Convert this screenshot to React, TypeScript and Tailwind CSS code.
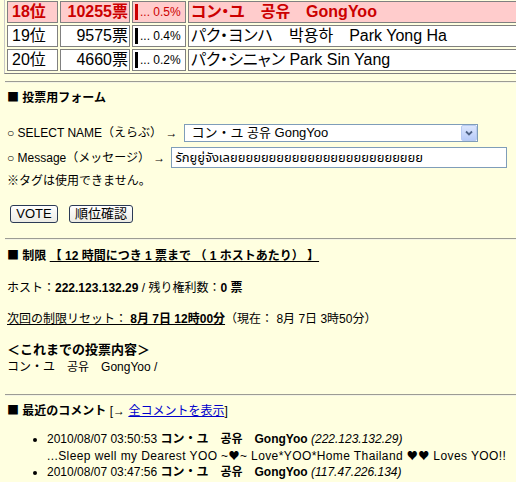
import React from 'react';

const rows = [
  { rank: '18位', votes: '10255票', pct: '0.5%', name: 'コン・ユ　공유　GongYoo', hi: true },
  { rank: '19位', votes: '9575票', pct: '0.4%', name: 'パク・ヨンハ　박용하　Park Yong Ha', hi: false },
  { rank: '20位', votes: '4660票', pct: '0.2%', name: 'パク・シニャン Park Sin Yang', hi: false },
];

const comments = [
  { date: '2010/08/07 03:50:53', ip: '(222.123.132.29)', text: true },
  { date: '2010/08/07 03:47:56', ip: '(117.47.226.134)', text: false },
];

const cjk = "font-['Noto_Sans_CJK_JP',sans-serif]";

function Rule() {
  return <div className="ml-[5px] h-[2px] border-t border-b border-t-[#9c9c94] border-b-[#f4f4e4]" />;
}

function Sq() {
  return <span className={`${cjk} font-normal`}>■</span>;
}

function Heart() {
  return <span className={`${cjk} text-[11px]`}>♥</span>;
}

export default function App() {
  return (
    <div className="w-[516px] h-[482px] overflow-hidden bg-[#ffffe0] text-black text-[12px] leading-4 font-['Liberation_Sans','Noto_Sans_CJK_JP','Noto_Sans_Thai',sans-serif]">
      <div className="w-[560px]">
        {/* ranking table */}
        <table className="-mt-[2px] ml-[4px] w-[556px] border-separate border-spacing-[2px] border border-t-[#c8c8c8] border-l-[#c8c8c8] border-b-[#808080] border-r-[#808080] text-[16px] leading-5 [font-feature-settings:'palt']">
          <tbody>
            {rows.map(r => {
              const cell = r.hi
                ? 'h-[22px] p-0 border border-[#808080] bg-[#ffcccc] text-[#cc0000] font-bold'
                : 'h-[22px] p-0 border border-[#808080] bg-white';
              return (
                <tr key={r.rank}>
                  <td className={`${cell} w-[51px] pl-[4px]`}>{r.rank}</td>
                  <td className={`${cell} w-[70px] pr-[1px] text-right`}>{r.votes}</td>
                  <td className={`${cell} w-[54px] pl-[2px]`}>
                    <div className="flex items-center gap-[2px] font-normal">
                      <span className={r.hi ? 'w-[3px] h-[16px] bg-[#cc0000]' : 'w-[3px] h-[16px] bg-black'} />
                      <span className="text-[12px] leading-4">... {r.pct}</span>
                    </div>
                  </td>
                  <td className={`${cell} pl-[2px] whitespace-nowrap`}>{r.name}</td>
                </tr>
              );
            })}
          </tbody>
        </table>

        <div className="mt-[7px]"><Rule /></div>

        {/* vote form */}
        <div className="px-[7px]">
          <div className="mt-[6px] font-bold"><Sq /> 投票用フォーム</div>

          <div className="mt-[18px] flex items-center h-[18px]">
            <span>○ SELECT NAME（えらぶ） →</span>
            <div className="ml-[7px] w-[294px] h-[18px] flex items-center justify-between bg-white border border-[#7f9db9]">
              <span className="pl-[6px] text-[13px] leading-4">コン・ユ 공유 GongYoo</span>
              <div className="w-[16px] h-[16px] rounded-[2px] border border-[#b8cbf2] bg-gradient-to-b from-[#dce6fd] to-[#b7cbf8] flex items-center justify-center">
                <svg width="8" height="6" viewBox="0 0 8 6">
                  <path d="M1 1.5 L4 4.5 L7 1.5" stroke="#4d6185" strokeWidth="1.8" fill="none" />
                </svg>
              </div>
            </div>
          </div>

          <div className="mt-[5px] flex items-center h-[21px]">
            <span>○ Message（メッセージ） →</span>
            <div className="ml-[6px] w-[336px] h-[21px] flex items-center bg-white border border-[#7f9db9]">
              <span className="pl-[3px] text-[13px] leading-4 whitespace-nowrap">รักยูยู่จังเลยยยยยยยยยยยยยยยยยยยยยยยยย</span>
            </div>
          </div>

          <div className="mt-[5px]">※タグは使用できません。</div>

          <div className="mt-[16px] ml-[3px] flex gap-[11px]">
            <button className="h-[18px] w-[48px] rounded-[3px] border border-[#2b3a55] bg-gradient-to-b from-white to-[#ecebe4] text-[13px] leading-4">
              VOTE
            </button>
            <button className="h-[18px] w-[64px] rounded-[3px] border border-[#2b3a55] bg-gradient-to-b from-white to-[#ecebe4] text-[13px] leading-4">
              順位確認
            </button>
          </div>
        </div>

        <div className="mt-[15px]"><Rule /></div>

        {/* limits */}
        <div className="px-[7px]">
          <div className="mt-[7px]">
            <span className="font-bold"><Sq /> 制限</span>{' '}
            <span className="font-bold underline">【 12 時間につき 1 票まで （ 1 ホストあたり） 】</span>
          </div>
          <div className="mt-[16px]">
            ホスト：<b>222.123.132.29</b> / 残り権利数：<b>0 票</b>
          </div>
          <div className="mt-[15px]">
            <span className="underline">次回の制限リセット： <b>8月 7日 12時00分</b></span>（現在： 8月 7日 3時50分）
          </div>
          <div className="mt-[14px] text-[13px] leading-[18px] font-bold">＜これまでの投票内容＞</div>
          <div>コン・ユ　공유　GongYoo /</div>
        </div>

        <div className="mt-[19px]"><Rule /></div>

        {/* comments */}
        <div className="px-[7px]">
          <div className="mt-[6px]">
            <span className="font-bold"><Sq /> 最近のコメント</span> [→{' '}
            <span className="text-[#0000cc] underline">全コメントを表示</span>]
          </div>
          <ul className="mt-[12px] pl-[40px] list-disc">
            {comments.map(c => (
              <li key={c.date}>
                {c.date} <b>コン・ユ　공유　GongYoo</b> <i>{c.ip}</i>
                {c.text && (
                  <div className="tracking-[0.4px] whitespace-nowrap">
                    ...Sleep well my Dearest YOO ~<Heart />~ Love*YOO*Home Thailand <Heart /><Heart /> Loves YOO!!
                  </div>
                )}
              </li>
            ))}
          </ul>
        </div>
      </div>
    </div>
  );
}
